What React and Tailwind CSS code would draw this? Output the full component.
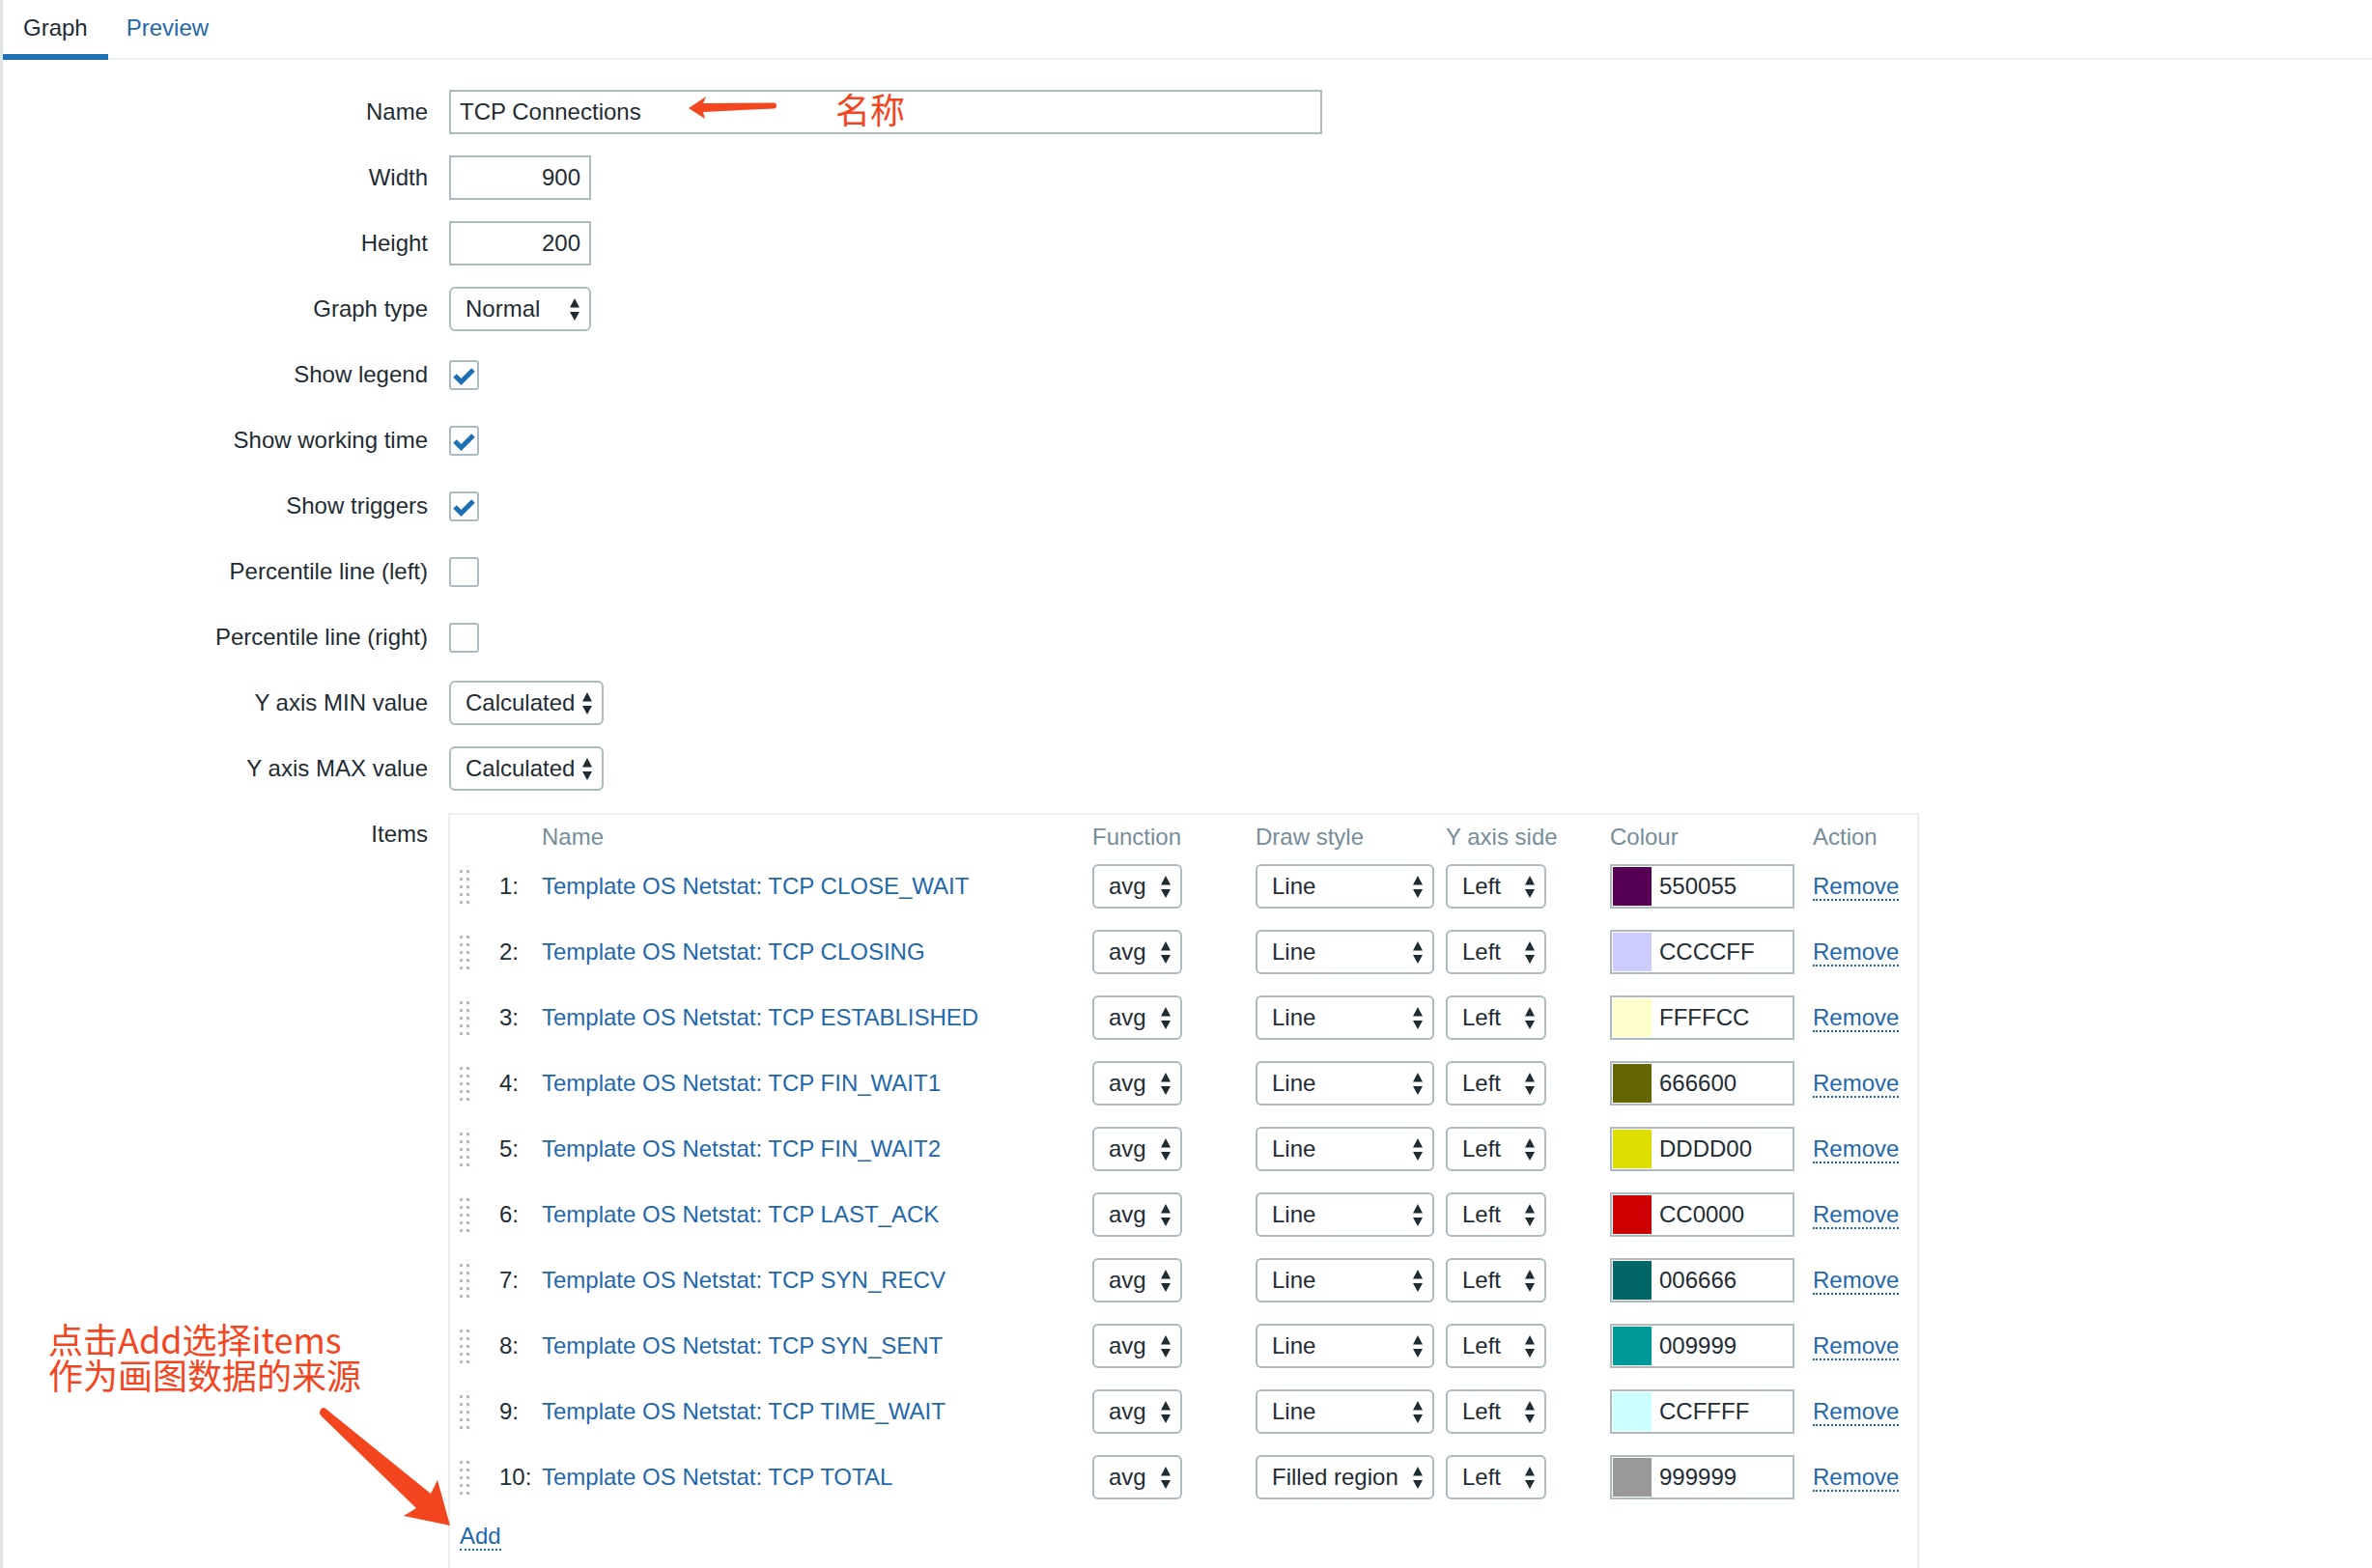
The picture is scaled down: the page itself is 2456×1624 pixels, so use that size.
import React from "react";

const LINK = "text-[#1f68ac]";

const items = [
  { name: "TCP CLOSE_WAIT", color: "550055" },
  { name: "TCP CLOSING", color: "CCCCFF" },
  { name: "TCP ESTABLISHED", color: "FFFFCC" },
  { name: "TCP FIN_WAIT1", color: "666600" },
  { name: "TCP FIN_WAIT2", color: "DDDD00" },
  { name: "TCP LAST_ACK", color: "CC0000" },
  { name: "TCP SYN_RECV", color: "006666" },
  { name: "TCP SYN_SENT", color: "009999" },
  { name: "TCP TIME_WAIT", color: "CCFFFF" },
  { name: "TCP TOTAL", color: "999999", style: "Filled region" },
];

const Arrows = () => (
  <svg width="10" height="23" viewBox="0 0 10 23">
    <path d="M0 9.5 L5 0 L10 9.5 Z M0 14 L10 14 L5 23 Z" fill="#1f2c33" />
  </svg>
);

const Select = ({ value, className }) => (
  <div
    className={
      "h-[46px] border-2 border-[#acbbc0] rounded-[6px] bg-white flex items-center justify-between pl-[15px] pr-[10px] " +
      className
    }
  >
    <span>{value}</span>
    <Arrows />
  </div>
);

const Checkbox = ({ checked }) => (
  <div className="w-[31px] h-[31px] border-2 border-[#acbbc0] rounded-[3px] bg-white">
    {checked && (
      <svg width="27" height="27" viewBox="0 0 27 27">
        <path d="M4 14 L10.5 20.5 L23 8" fill="none" stroke="#1f6fb5" strokeWidth="5" />
      </svg>
    )}
  </div>
);

const Row = ({ label, children }) => (
  <div className="flex items-start">
    <div className="w-[440px] h-[46px] flex items-center justify-end">{label}</div>
    <div className="ml-[22px] h-[46px] flex items-center">{children}</div>
  </div>
);

const Handle = () => (
  <div className="grid grid-cols-[3px_3px] gap-x-[4px] gap-y-[5px]">
    {Array.from({ length: 10 }).map((_, i) => (
      <div key={i} className="w-[3px] h-[3px] bg-[#b3bec4]" />
    ))}
  </div>
);

export default function App() {
  return (
    <div className="relative w-[2456px] h-[1624px] overflow-hidden bg-white border-l-[3px] border-[#e1e6e9] font-['Liberation_Sans',Arial,sans-serif] text-[24px] text-[#1f2c33]">
      {/* tabs */}
      <div className="flex h-[62px] border-b-2 border-[#ebeef0]">
        <div className="h-[62px] px-[21px] pt-[2px] flex items-center border-b-[6px] border-[#1f6fb5]">Graph</div>
        <div className={"h-[62px] pl-[19px] pr-[21px] pt-[2px] pb-[6px] flex items-center " + LINK}>Preview</div>
      </div>

      {/* form */}
      <div className="mt-[31px] flex flex-col gap-[22px]">
        <Row label="Name">
          <div className="h-[46px] w-[904px] border-2 border-[#acbbc0] flex items-center pl-[9px]">TCP Connections</div>
        </Row>
        <Row label="Width">
          <div className="h-[46px] w-[147px] border-2 border-[#acbbc0] flex items-center justify-end pr-[9px]">900</div>
        </Row>
        <Row label="Height">
          <div className="h-[46px] w-[147px] border-2 border-[#acbbc0] flex items-center justify-end pr-[9px]">200</div>
        </Row>
        <Row label="Graph type">
          <Select value="Normal" className="w-[147px]" />
        </Row>
        <Row label="Show legend">
          <Checkbox checked />
        </Row>
        <Row label="Show working time">
          <Checkbox checked />
        </Row>
        <Row label="Show triggers">
          <Checkbox checked />
        </Row>
        <Row label="Percentile line (left)">
          <Checkbox />
        </Row>
        <Row label="Percentile line (right)">
          <Checkbox />
        </Row>
        <Row label="Y axis MIN value">
          <Select value="Calculated" className="w-[160px]" />
        </Row>
        <Row label="Y axis MAX value">
          <Select value="Calculated" className="w-[160px]" />
        </Row>

        {/* items */}
        <div className="flex items-start">
          <div className="w-[440px] h-[46px] flex items-center justify-end">Items</div>
          <div className="ml-[21px] mt-[1px] w-[1523px] border-2 border-[#ebeef0] pl-[10px] pb-[60px]">
            <div className="grid grid-cols-[41px_44px_570px_169px_197px_170px_210px_1fr] h-[46px] items-center text-[#768d99]">
              <div />
              <div />
              <div>Name</div>
              <div>Function</div>
              <div>Draw style</div>
              <div>Y axis side</div>
              <div>Colour</div>
              <div>Action</div>
            </div>
            <div className="mt-[5px] grid grid-cols-[41px_44px_570px_169px_197px_170px_210px_1fr] auto-rows-[46px] gap-y-[22px] items-center">
              {items.map((it, i) => (
                <React.Fragment key={i}>
                  <Handle />
                  <div>{i + 1}:</div>
                  <div className={LINK}>Template OS Netstat: {it.name}</div>
                  <Select value="avg" className="w-[93px]" />
                  <Select value={it.style || "Line"} className="w-[185px]" />
                  <Select value="Left" className="w-[104px]" />
                  <div className="w-[191px] h-[46px] border-2 border-[#acbbc0] flex items-center pl-[1px]">
                    <div className="w-[40px] h-[40px]" style={{ backgroundColor: "#" + it.color }} />
                    <span className="ml-[8px]">{it.color}</span>
                  </div>
                  <div>
                    <span className={"inline-block leading-[26px] border-b-2 border-dotted border-[#1f68ac] " + LINK}>Remove</span>
                  </div>
                </React.Fragment>
              ))}
            </div>
            <div className="mt-[20px]">
              <span className={"inline-block leading-[26px] border-b-2 border-dotted border-[#1f68ac] " + LINK}>Add</span>
            </div>
          </div>
        </div>
      </div>

      {/* annotations */}
      <svg className="absolute left-[697px] top-[90px]" width="110" height="40" viewBox="0 0 110 40">
        <path d="M13 22 L31 10 L28 17 L101 16.5 A3 3 0 0 1 101 22.5 L28 26 L30 33 Z" fill="#f3461f" />
      </svg>
      <div className="absolute left-[862px] top-[94px] text-[36px] leading-[36px] text-[#f3461f] font-['Noto_Sans_CJK_SC',sans-serif]">
        名称
      </div>
      <div className="absolute left-[47px] top-[1368px] text-[36px] leading-[37px] text-[#f3461f] font-['Noto_Sans_CJK_SC',sans-serif]">
        <div>点击Add选择items</div>
        <div>作为画图数据的来源</div>
      </div>
      <svg className="absolute left-[320px] top-[1450px]" width="160" height="140" viewBox="0 0 160 140">
        <path d="M13 8 L123 97 L130 83 L143 130 L95 120 L108 112 L10 17 A5 5 0 0 1 13 8 Z" fill="#f3461f" />
      </svg>
    </div>
  );
}
